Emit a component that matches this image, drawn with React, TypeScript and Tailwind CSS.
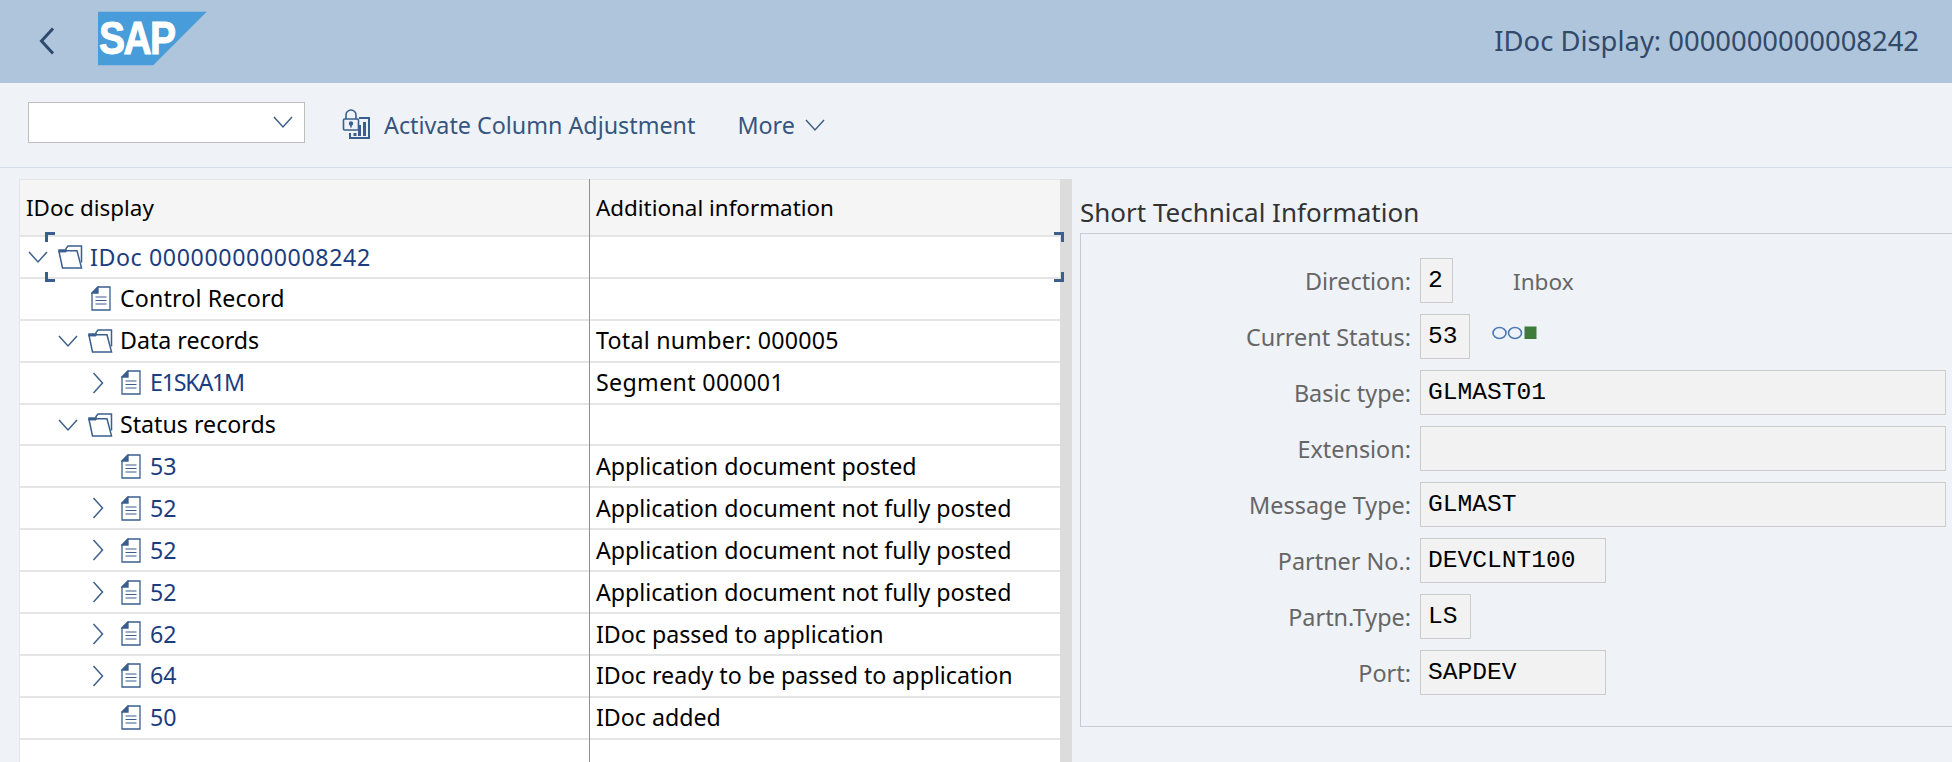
import React from "react";

const FONT = "font-['Noto_Sans',sans-serif]";

function Chevron({ dir }: { dir: "down" | "right" }) {
  return dir === "down" ? (
    <svg width="22" height="14" viewBox="0 0 22 14" fill="none" stroke="#3f6088" strokeWidth="1.5"><path d="M2 2l9 10 9-10" /></svg>
  ) : (
    <svg width="14" height="24" viewBox="0 0 14 24" fill="none" stroke="#3f6088" strokeWidth="1.5"><path d="M2.5 2l9 10-9 10" /></svg>
  );
}

function FolderIcon() {
  return (
    <svg width="25" height="24" viewBox="0 0 25 24" fill="none" stroke="#3a5f8f" strokeWidth="1.5">
      <path d="M8 6V3.5L10 1h13.5v16.5" />
      <path d="M1 6.5h6.5l1-.8 10.5 0 4.5 17.2H4.5z" />
      <path d="M1 5h6.5v1.5H1z" fill="#3a5f8f" />
    </svg>
  );
}

function DocIcon() {
  return (
    <svg width="20" height="25" viewBox="0 0 20 25" fill="none" stroke="#3a5f8f" strokeWidth="1.3">
      <path d="M7 1h12v23H1V7z" />
      <path d="M7 1v6H1z" fill="#3a5f8f" />
      <path d="M4.5 11h11M4.5 14.5h11M4.5 18h11" strokeWidth="1.1" />
    </svg>
  );
}

function LockChartIcon() {
  return (
    <svg width="28" height="30" viewBox="0 0 28 30" fill="none" stroke="#3a5f8f" strokeWidth="1.6">
      <path d="M4 10V6a5 5 0 0 1 10 0v4" />
      <rect x="1.5" y="10" width="15" height="11" rx="1" />
      <circle cx="9" cy="14.5" r="1.4" fill="#3a5f8f" />
      <path d="M9 15v3.5" />
      <path d="M17 9h10v20H8v-5" strokeWidth="2" />
      <path d="M13 27V24M17.5 27V16M22.5 27V13" strokeWidth="3" />
    </svg>
  );
}

type Row = { level: number; chev?: "down" | "right"; icon: "folder" | "doc"; text: string; link?: boolean; info: string; tr?: string; itr?: string };

const rows: Row[] = [
  { level: 0, chev: "down", icon: "folder", text: "IDoc 0000000000008242", link: true, info: "", tr: "tracking-[0.6px]" },
  { level: 1, icon: "doc", text: "Control Record", info: "", tr: "tracking-[0.15px]" },
  { level: 1, chev: "down", icon: "folder", text: "Data records", info: "Total number: 000005", itr: "tracking-[0.25px]" },
  { level: 2, chev: "right", icon: "doc", text: "E1SKA1M", link: true, info: "Segment 000001", tr: "tracking-[-1.2px]", itr: "tracking-[0.35px]" },
  { level: 1, chev: "down", icon: "folder", text: "Status records", info: "" },
  { level: 2, icon: "doc", text: "53", link: true, info: "Application document posted" },
  { level: 2, chev: "right", icon: "doc", text: "52", link: true, info: "Application document not fully posted" },
  { level: 2, chev: "right", icon: "doc", text: "52", link: true, info: "Application document not fully posted" },
  { level: 2, chev: "right", icon: "doc", text: "52", link: true, info: "Application document not fully posted" },
  { level: 2, chev: "right", icon: "doc", text: "62", link: true, info: "IDoc passed to application" },
  { level: 2, chev: "right", icon: "doc", text: "64", link: true, info: "IDoc ready to be passed to application" },
  { level: 2, icon: "doc", text: "50", link: true, info: "IDoc added" },
];

const indent = ["pl-[7px]", "pl-[37px]", "pl-[67px]"];

type Field = { label: string; value: string; w: string };
const fields: Field[] = [
  { label: "Basic type:", value: "GLMAST01", w: "w-[526px]" },
  { label: "Extension:", value: "", w: "w-[526px]" },
  { label: "Message Type:", value: "GLMAST", w: "w-[526px]" },
  { label: "Partner No.:", value: "DEVCLNT100", w: "w-[186px]" },
  { label: "Partn.Type:", value: "LS", w: "w-[51px]" },
  { label: "Port:", value: "SAPDEV", w: "w-[186px]" },
];

function Value({ value, w }: { value: string; w: string }) {
  return (
    <div className={`${w} h-[45px] shrink-0 border border-[#cbcbcb] bg-[#f2f2f2] pl-[7px] font-['Liberation_Mono',monospace] text-[24.6px] leading-[44px] text-black`}>
      {value}
    </div>
  );
}

function Label({ children }: { children: React.ReactNode }) {
  return <div className="h-[45px] w-[325px] shrink-0 pr-[9px] text-right text-[23.4px] leading-[47px] text-[#666666]">{children}</div>;
}

function Bracket({ cls }: { cls: string }) {
  return <div className={`absolute h-[10px] w-[10px] border-[#3a5f8f] ${cls}`} />;
}

export default function App() {
  return (
    <div className={`flex h-[762px] w-[1952px] flex-col overflow-hidden bg-[#eff3f8] ${FONT}`}>
      <header className="flex h-[83px] shrink-0 items-center bg-[#afc5db]">
        <svg className="ml-[39px] shrink-0 -translate-y-[1px]" width="16" height="28" viewBox="0 0 16 28" fill="none" stroke="#2f4a6e" strokeWidth="3">
          <path d="M14 1.5L2.5 14 14 26.5" />
        </svg>
        <div className="relative ml-[43px] h-[54px] w-[109px] shrink-0 -translate-y-[3.5px] overflow-hidden">
          <svg className="absolute inset-0" width="109" height="54" viewBox="0 0 109 54">
            <polygon points="0,0 109,0 55,54 0,54" fill="#479cd9" />
          </svg>
          <span className="absolute left-[1px] top-[2px] origin-left scale-x-[0.85] font-['Liberation_Sans',sans-serif] text-[46px] leading-[48px] font-bold tracking-[-2px] text-white [-webkit-text-stroke:1px_white]">SAP</span>
        </div>
        <div className="ml-auto mr-[33px] -translate-y-[1px] text-[27.4px] text-[#32496a]">IDoc Display: 0000000000008242</div>
      </header>

      <div className="flex h-[85px] shrink-0 items-center border-b border-[#d5dde8] pl-[28px] text-[#36557f]">
        <div className="mb-[6px] flex h-[41px] w-[277px] items-center justify-end border border-[#bdbdbd] bg-white pr-[10px]">
          <Chevron dir="down" />
        </div>
        <div className="mb-[3px] ml-[37px]"><LockChartIcon /></div>
        <span className="ml-[14px] text-[23.3px]">Activate Column Adjustment</span>
        <span className="ml-[42px] text-[23.3px]">More</span>
        <span className="ml-[9px]"><Chevron dir="down" /></span>
      </div>

      <main className="flex min-h-0 flex-1 pl-[19px] pt-[11px]">
        <div className="relative flex w-[1053px] shrink-0">
          <div className="flex min-w-0 flex-1 flex-col border-l border-[#e5e5e5]">
            <div className="flex h-[58px] shrink-0 border-t border-b-2 border-[#e5e5e5] bg-[#f5f5f5] pt-[1px] text-[22.4px] text-black">
              <div className="flex w-[570px] shrink-0 items-center pl-[6px]">IDoc display</div>
              <div className="flex items-center pl-[6px]">Additional information</div>
            </div>
            <div className="flex-1 bg-white">
              {rows.map((r, i) => (
                <div key={i} className="flex h-[41.9px] border-b-2 border-[#e5e5e5] text-[23.2px]">
                  <div className={`flex w-[570px] shrink-0 items-center ${indent[r.level]}`}>
                    <span className="flex w-[22px] shrink-0 justify-center">{r.chev ? <Chevron dir={r.chev} /> : null}</span>
                    <span className="ml-[8px] flex w-[27px] shrink-0 justify-center">{r.icon === "folder" ? <FolderIcon /> : <DocIcon />}</span>
                    <span className={`ml-[6px] ${r.tr ?? ""} ${r.link ? "text-[#1b3d80]" : "text-black"}`}>{r.text}</span>
                  </div>
                  <div className={`flex items-center pl-[6px] text-black ${r.itr ?? ""}`}>{r.info}</div>
                </div>
              ))}
            </div>
          </div>
          <div className="w-[12px] shrink-0 bg-[#dcdcdc]" />
          <div className="absolute bottom-0 left-[570px] top-0 w-[1px] bg-[#8f8f8f]" />
          <Bracket cls="left-[26px] top-[53px] border-l-[3px] border-t-[3px]" />
          <Bracket cls="left-[26px] top-[93px] border-b-[3px] border-l-[3px]" />
          <Bracket cls="left-[1035px] top-[53px] border-r-[3px] border-t-[3px]" />
          <Bracket cls="left-[1035px] top-[93px] border-b-[3px] border-r-[3px]" />
        </div>

        <section className="ml-[8px] flex min-w-0 flex-1 flex-col">
          <h2 className="mt-[12px] h-[42px] text-[26px] leading-[43px] font-normal text-[#333333]">Short Technical Information</h2>
          <div className="h-[494px] border border-r-0 border-[#c6ccd3] pl-[14px] pt-[24px]">
            <div className="flex">
              <Label>Direction:</Label>
              <Value value="2" w="w-[33px]" />
              <span className="ml-[60px] h-[45px] text-[22.6px] leading-[47px] text-[#666666]">Inbox</span>
            </div>
            <div className="mt-[11px] flex">
              <Label>Current Status:</Label>
              <Value value="53" w="w-[50px]" />
              <svg className="ml-[22px] mt-[12px] shrink-0" width="46" height="14" viewBox="0 0 46 14" fill="none">
                <ellipse cx="7.5" cy="7" rx="6.5" ry="5.5" stroke="#4a7ab5" strokeWidth="1.6" />
                <ellipse cx="23" cy="7" rx="6.5" ry="5.5" stroke="#4a7ab5" strokeWidth="1.6" />
                <rect x="32.5" y="0.5" width="12" height="12.5" fill="#3f7c3c" />
              </svg>
            </div>
            {fields.map((f) => (
              <div key={f.label} className="mt-[11px] flex">
                <Label>{f.label}</Label>
                <Value value={f.value} w={f.w} />
              </div>
            ))}
          </div>
        </section>
      </main>
    </div>
  );
}
